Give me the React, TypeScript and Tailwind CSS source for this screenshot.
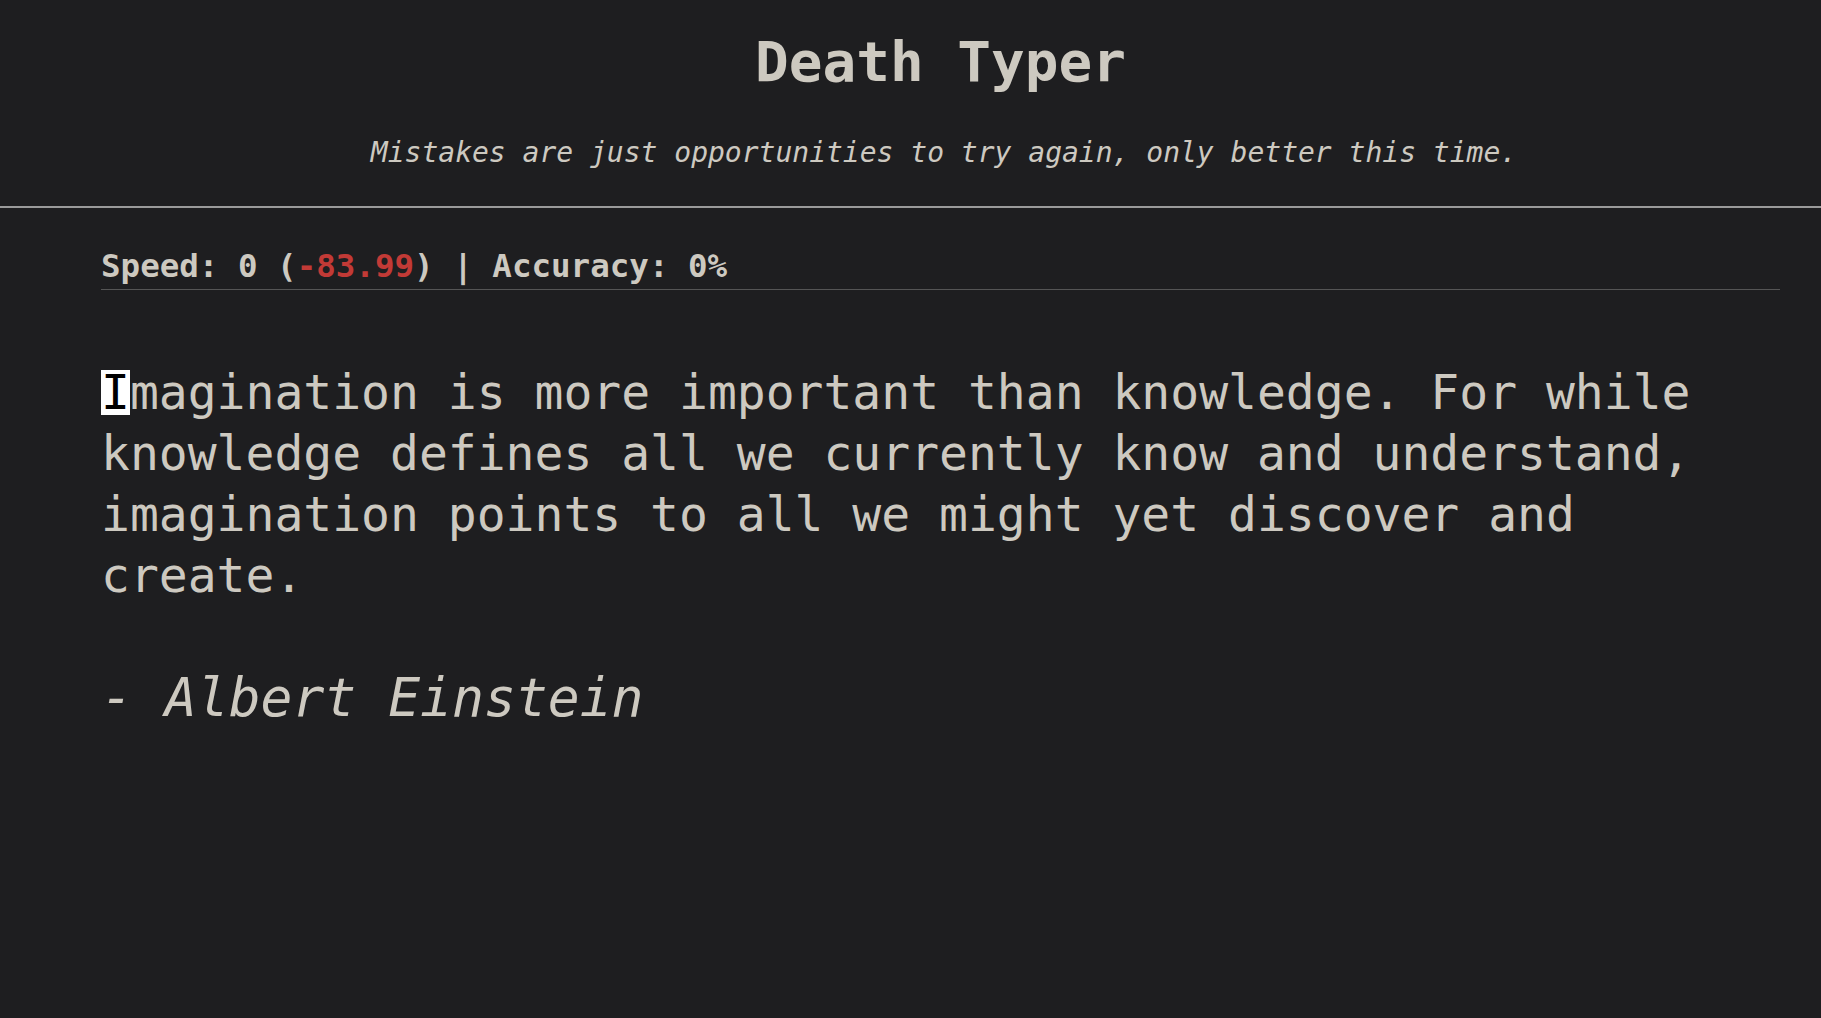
import React from "react";

const mono = "font-['DejaVu_Sans_Mono','Liberation_Mono',monospace]";

function App() {
  const quote =
    "Imagination is more important than knowledge. For while knowledge defines all we currently know and understand, imagination points to all we might yet discover and create.";
  return (
    <div className={`min-h-screen w-full bg-[#1e1e20] text-[#cdc9c0] ${mono}`}>
      <header className="border-b-2 border-[#9a9a9a] pl-[101px] pr-[41px] pt-[34px] pb-[39px] text-center">
        <h1 className="text-[56px] leading-[56px] font-bold">Death Typer</h1>
        <p className="mt-[49px] ml-[7px] text-[28px] leading-[28px] italic">
          Mistakes are just opportunities to try again, only better this time.
        </p>
      </header>
      <main className="pl-[101px] pr-[41px]">
        <div className="mt-[42px] border-b border-[#555] pb-[7px] text-[32.5px] leading-[32px] font-bold">
          Speed: 0 (<span className="text-[#c23a36]">-83.99</span>) | Accuracy: 0%
        </div>
        <p className="mt-[72px] text-[48px] leading-[61px] pr-[20px]">
          <span className="inline-block h-[45px] bg-white leading-[45px] text-black">
            {quote[0]}
          </span>
          {quote.slice(1)}
        </p>
        <p className="mt-[65px] text-[53px] leading-[53px] italic">- Albert Einstein</p>
      </main>
    </div>
  );
}

export default App;
